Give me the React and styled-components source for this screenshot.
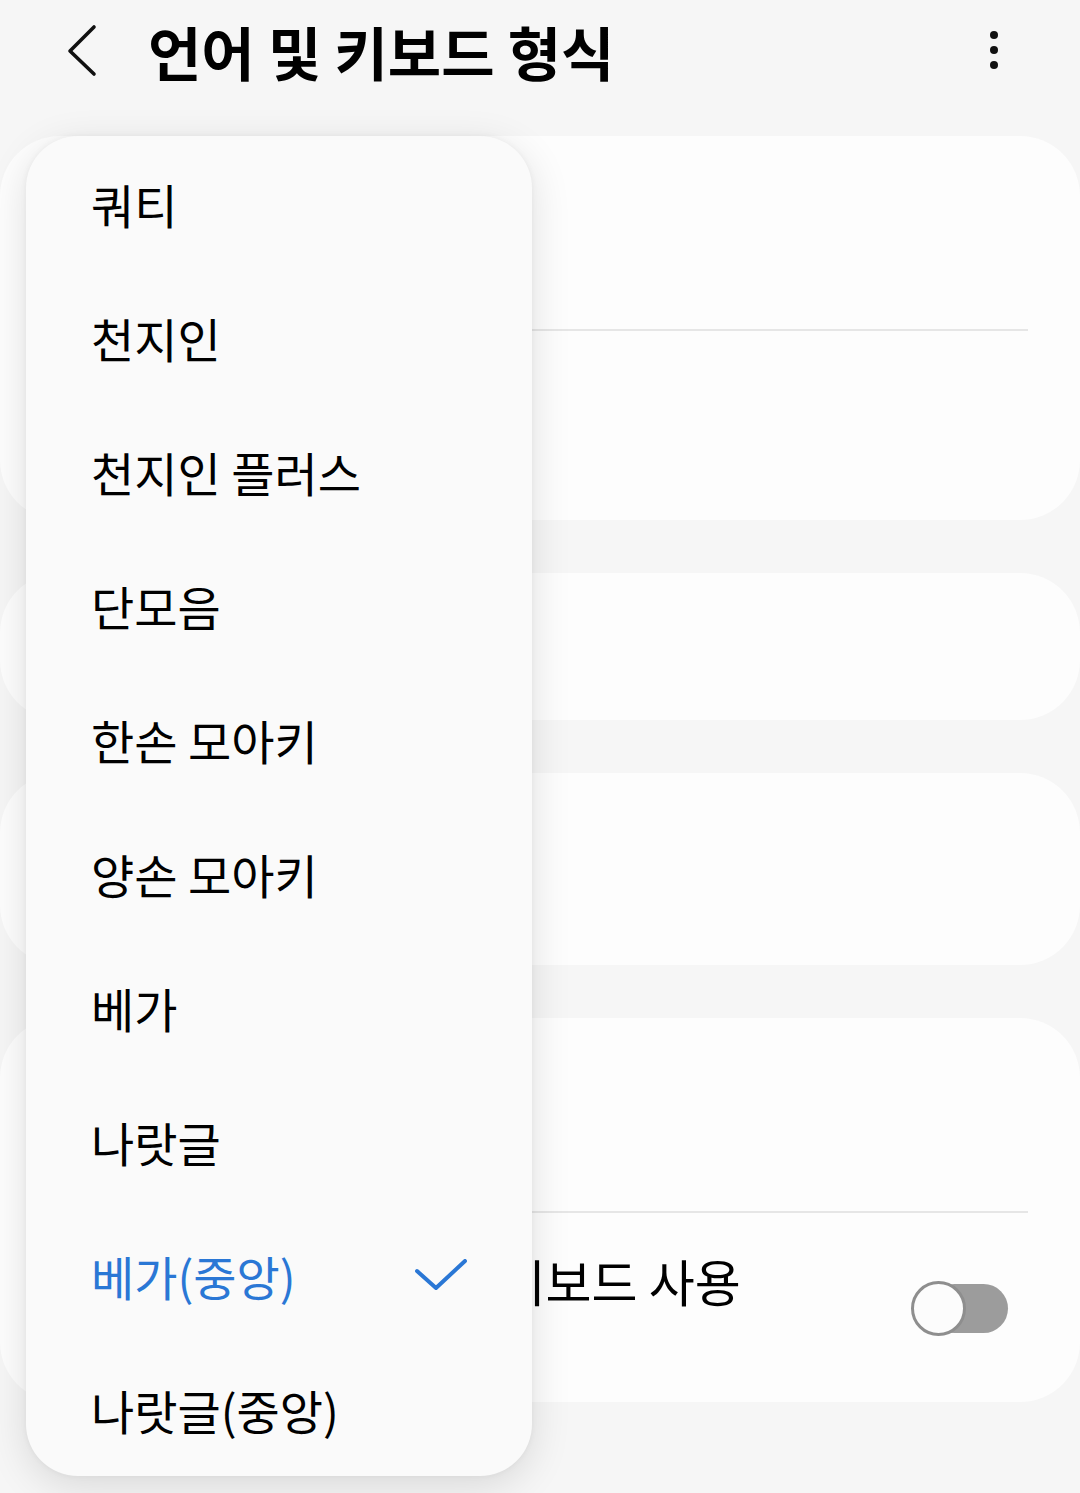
import React from 'react';
import styled, { createGlobalStyle } from 'styled-components';

const GlobalStyle = createGlobalStyle`
  html, body { margin: 0; padding: 0; background: #f6f6f6; }
  body { font-family: "Noto Sans CJK KR", "Noto Sans", sans-serif; color: #000; }
  * { box-sizing: border-box; }
`;

const Screen = styled.div`
  position: relative;
  width: 1080px;
  height: 1493px;
  overflow: hidden;
  background: #f6f6f6;
`;

const Header = styled.header`
  display: flex;
  align-items: center;
  height: 102px;
  padding: 0 76px 0 62px;
`;

const IconButton = styled.button`
  display: flex;
  align-items: center;
  justify-content: center;
  width: ${(p) => p.$w}px;
  height: 60px;
  padding: 0;
  border: 0;
  background: transparent;
  color: #111;
`;

const Title = styled.h1`
  flex: 1;
  margin: 0 0 0 46px;
  font-size: 58px;
  font-weight: 700;
  line-height: 1;
  color: #000;
`;

const CardList = styled.div`
  display: flex;
  flex-direction: column;
  gap: 53px;
  padding-top: 34px;
`;

const Card = styled.section`
  background: #fdfdfd;
  border-radius: 60px;
`;

const Row = styled.div`
  display: flex;
  align-items: center;
  justify-content: space-between;
  height: ${(p) => p.$h}px;
  padding: 0 72px 0 52px;
`;

const RowText = styled.div`
  display: flex;
  flex-direction: column;
  gap: 2px;
  margin-bottom: 9px;
`;

const RowTitle = styled.span`
  font-size: 50px;
  line-height: 1.2;
  color: #000;
  white-space: nowrap;
`;

const RowSub = styled.span`
  font-size: 36px;
  line-height: 1.2;
  color: #3c78d0;
`;

const Divider = styled.div`
  height: 2px;
  margin: 0 52px 0 56px;
  background: #e6e6e6;
`;

const Toggle = styled.div`
  position: relative;
  width: 97px;
  height: 55px;
  flex-shrink: 0;
  margin-top: 2px;
`;

const Track = styled.div`
  position: absolute;
  right: 0;
  top: 3px;
  width: 78px;
  height: 49px;
  border-radius: 25px;
  background: #9c9c9c;
`;

const Thumb = styled.div`
  position: absolute;
  left: 0;
  top: 0;
  width: 55px;
  height: 55px;
  border-radius: 50%;
  background: #fcfcfc;
  border: 3px solid #8e8e8e;
`;

const Menu = styled.ul`
  position: absolute;
  left: 26px;
  top: 136px;
  width: 506px;
  margin: 0;
  padding: 0;
  list-style: none;
  border-radius: 52px;
  background: #fafafa;
  box-shadow: 0 10px 40px rgba(0, 0, 0, 0.12), 0 0 6px rgba(0, 0, 0, 0.05);
  overflow: hidden;
`;

const MenuItem = styled.li`
  display: flex;
  align-items: center;
  justify-content: space-between;
  height: 134px;
  padding: 0 65px;
  font-size: 47px;
  line-height: 1;
  color: ${(p) => (p.$selected ? '#2a77d5' : '#000')};
  white-space: nowrap;
`;

const options = [
  '쿼티',
  '천지인',
  '천지인 플러스',
  '단모음',
  '한손 모아키',
  '양손 모아키',
  '베가',
  '나랏글',
  '베가(중앙)',
  '나랏글(중앙)',
];

const selected = '베가(중앙)';

function BackIcon() {
  return (
    <svg width="40" height="56" viewBox="0 0 40 56">
      <path d="M32 4 L8 28 L32 51" fill="none" stroke="#111" strokeWidth="3.6" strokeLinecap="round" strokeLinejoin="round" />
    </svg>
  );
}

function MoreIcon() {
  return (
    <svg width="12" height="44" viewBox="0 0 12 44">
      <circle cx="6" cy="6" r="4" fill="#111" />
      <circle cx="6" cy="21" r="4" fill="#111" />
      <circle cx="6" cy="36" r="4" fill="#111" />
    </svg>
  );
}

function CheckIcon() {
  return (
    <svg width="52" height="32" viewBox="0 0 52 32">
      <path d="M2 12 L21 29 L50 2" fill="none" stroke="#2a77d5" strokeWidth="4" strokeLinecap="round" strokeLinejoin="round" />
    </svg>
  );
}

export default function App() {
  return (
    <Screen>
      <GlobalStyle />
      <Header>
        <IconButton $w={40} aria-label="뒤로">
          <BackIcon />
        </IconButton>
        <Title>언어 및 키보드 형식</Title>
        <IconButton $w={20} aria-label="더보기">
          <MoreIcon />
        </IconButton>
      </Header>

      <CardList>
        <Card>
          <Row $h={193} />
          <Divider />
          <Row $h={189} />
        </Card>
        <Card>
          <Row $h={147} />
        </Card>
        <Card>
          <Row $h={192} />
        </Card>
        <Card>
          <Row $h={193} />
          <Divider />
          <Row $h={189}>
            <RowText>
              <RowTitle>가로 화면에서 플로팅 키보드 사용</RowTitle>
              <RowSub>사용 안 함</RowSub>
            </RowText>
            <Toggle>
              <Track />
              <Thumb />
            </Toggle>
          </Row>
        </Card>
      </CardList>

      <Menu>
        {options.map((o) => (
          <MenuItem key={o} $selected={o === selected}>
            <span>{o}</span>
            {o === selected && <CheckIcon />}
          </MenuItem>
        ))}
      </Menu>
    </Screen>
  );
}
